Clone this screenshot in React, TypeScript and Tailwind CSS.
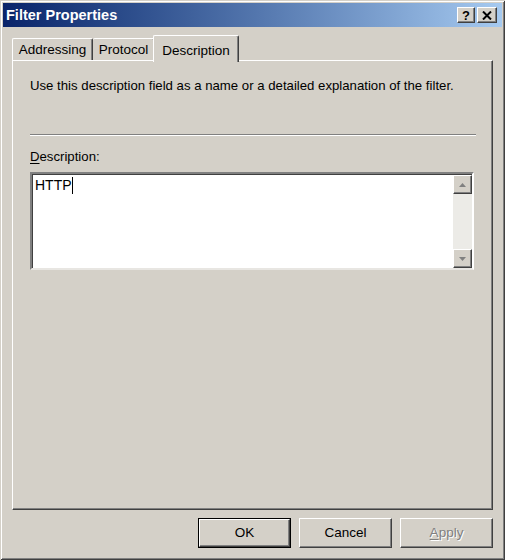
import React from "react";

function Raised({ className = "", children }: { className?: string; children?: React.ReactNode }) {
  return (
    <div
      className={
        "bg-[#d4d0c8] border border-t-white border-l-white border-r-[#404040] border-b-[#404040] shadow-[inset_-1px_-1px_0_#808080] flex items-center justify-center " +
        className
      }
    >
      {children}
    </div>
  );
}

export default function App() {
  return (
    <div className="w-[505px] h-[560px] bg-[#d4d0c8] p-[3px] flex flex-col font-['Liberation_Sans',Arial,sans-serif] text-black shadow-[inset_1px_1px_0_#d4d0c8,inset_-1px_-1px_0_#404040,inset_2px_2px_0_#ffffff,inset_-2px_-2px_0_#808080]">
      {/* Title bar */}
      <div className="h-[24px] flex items-center pl-[3px] pr-[5px] bg-linear-to-r from-[#0a246a] to-[#a6caf0]">
        <span className="text-white font-bold text-[14.5px] leading-none">Filter Properties</span>
        <div className="ml-auto flex gap-[2px]">
          <Raised className="w-[18px] h-[16px]">
            <span className="font-bold text-[13px] leading-none">?</span>
          </Raised>
          <Raised className="w-[20px] h-[16px]">
            <svg width="10" height="9" viewBox="0 0 10 9">
              <path d="M1 0.5 L9 8.5 M9 0.5 L1 8.5" stroke="black" strokeWidth="2" />
            </svg>
          </Raised>
        </div>
      </div>

      <div className="flex flex-col px-[9px] mt-[8px]">
        {/* Tabs */}
        <div className="flex items-end h-[25px] relative z-10 text-[13.5px]">
          <div className="w-[81px] h-[22px] bg-[#d4d0c8] border-t border-l border-r border-t-white border-l-white border-r-[#404040] shadow-[inset_-1px_0_0_#808080] rounded-t-[2px] flex items-center justify-center pt-[1px]">
            Addressing
          </div>
          <div className="w-[62px] h-[22px] bg-[#d4d0c8] border-t border-r border-t-white border-r-[#404040] shadow-[inset_-1px_0_0_#808080] rounded-t-[2px] flex items-center justify-center pt-[1px]">
            Protocol
          </div>
          <div className="w-[86px] h-[27px] mb-[-2px] ml-[-2px] bg-[#d4d0c8] border-t border-l border-r border-t-white border-l-white border-r-[#404040] shadow-[inset_-1px_0_0_#808080] rounded-t-[2px] flex items-start justify-center pt-[5px]">
            Description
          </div>
        </div>

        {/* Panel */}
        <div className="h-[450px] border border-t-white border-l-white border-r-[#404040] border-b-[#404040] shadow-[inset_-1px_-1px_0_#808080] pl-[17px] pr-[16px] pt-[17px] flex flex-col text-[13.2px]">
          <div className="leading-[16px]">Use this description field as a name or a detailed explanation of the filter.</div>
          <div className="mt-[40px] h-0 border-t border-b border-t-[#808080] border-b-white" />
          <div className="mt-[13px] leading-[16px]">
            <span className="underline underline-offset-2">D</span>escription:
          </div>
          <div className="mt-[7px] w-[444px] h-[98px] flex bg-white border-2 border-t-[#808080] border-l-[#808080] border-r-white border-b-[#e8e6e2] shadow-[inset_1px_1px_0_#404040]">
            <div className="flex-1 pl-[3px] pt-[3px] text-[14px] leading-[16px] flex items-start">
              <span>HTTP</span>
              <span className="inline-block w-[1px] h-[17px] bg-black" />
            </div>
            <div className="w-[19px] flex flex-col pt-[1px]">
              <Raised className="h-[19px]">
                <svg width="7" height="4" viewBox="0 0 7 4">
                  <path d="M3.5 0 L7 4 L0 4 Z" fill="#808080" />
                </svg>
              </Raised>
              <div className="flex-1 bg-[#ecebe7]" />
              <Raised className="h-[19px]">
                <svg width="7" height="4" viewBox="0 0 7 4">
                  <path d="M0 0 L7 0 L3.5 4 Z" fill="#808080" />
                </svg>
              </Raised>
            </div>
          </div>
        </div>

        {/* Buttons */}
        <div className="mt-[8px] flex justify-end gap-[8px] text-[13.5px]">
          <div className="w-[93px] h-[30px] border border-black">
            <Raised className="w-full h-full">OK</Raised>
          </div>
          <Raised className="w-[93px] h-[30px]">Cancel</Raised>
          <Raised className="w-[93px] h-[30px]">
            <span className="text-[#808080] [text-shadow:1px_1px_0_#ffffff]">
              <span className="underline underline-offset-2">A</span>pply
            </span>
          </Raised>
        </div>
      </div>
    </div>
  );
}
